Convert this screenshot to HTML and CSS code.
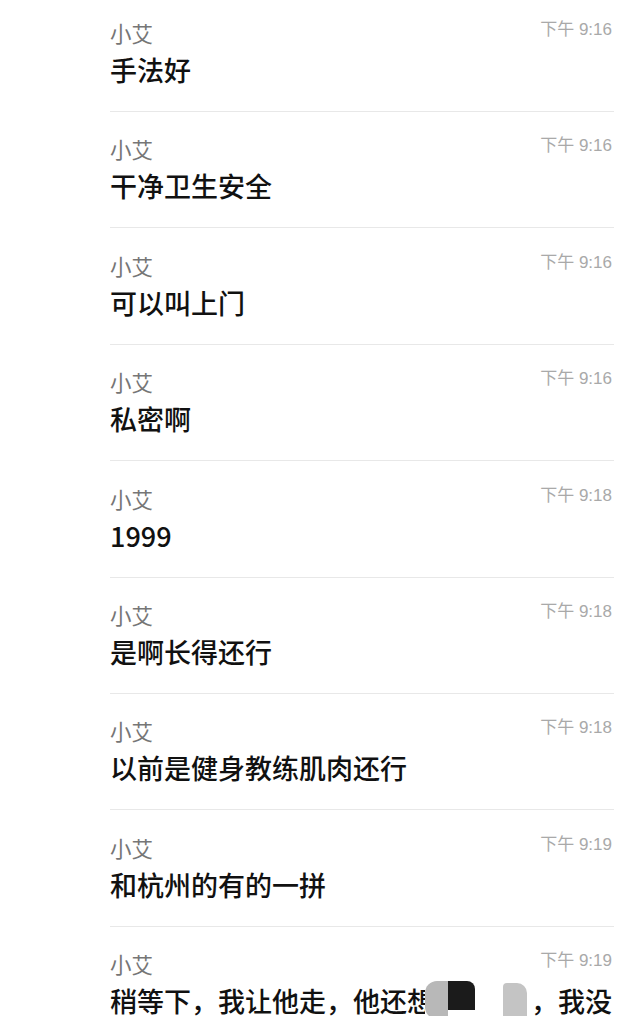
FILE: index.html
```html
<!DOCTYPE html>
<html lang="zh-CN">
<head>
<meta charset="utf-8">
<title>聊天记录</title>
<link rel="stylesheet" href="styles.css">
</head>
<body>
<ul class="list">
  <li class="item"><div class="head"><span class="name">小艾</span><span class="time">下午 9:16</span></div><div class="msg">手法好</div></li>
  <li class="item"><div class="head"><span class="name">小艾</span><span class="time">下午 9:16</span></div><div class="msg">干净卫生安全</div></li>
  <li class="item"><div class="head"><span class="name">小艾</span><span class="time">下午 9:16</span></div><div class="msg">可以叫上门</div></li>
  <li class="item"><div class="head"><span class="name">小艾</span><span class="time">下午 9:16</span></div><div class="msg">私密啊</div></li>
  <li class="item"><div class="head"><span class="name">小艾</span><span class="time">下午 9:18</span></div><div class="msg">1999</div></li>
  <li class="item"><div class="head"><span class="name">小艾</span><span class="time">下午 9:18</span></div><div class="msg">是啊长得还行</div></li>
  <li class="item"><div class="head"><span class="name">小艾</span><span class="time">下午 9:18</span></div><div class="msg">以前是健身教练肌肉还行</div></li>
  <li class="item"><div class="head"><span class="name">小艾</span><span class="time">下午 9:19</span></div><div class="msg">和杭州的有的一拼</div></li>
  <li class="item"><div class="head"><span class="name">小艾</span><span class="time">下午 9:19</span></div><div class="msg">稍等下，我让他走，他还想<span class="redact"><span class="r-gray"></span><span class="r-black"></span><span class="r-white"></span><span class="r-gray2"></span></span>，我没</div></li>
</ul>
</body>
</html>
```
FILE: styles.css
```css
html, body {
  margin: 0;
  padding: 0;
  background: #ffffff;
}
body {
  width: 637px;
  height: 1016px;
  overflow: hidden;
  font-family: "Noto Sans CJK SC", "Noto Sans", sans-serif;
}
.list {
  list-style: none;
  margin: -4.4px 0 0 0;
  padding: 0 23px 0 110px;
}
.item {
  box-sizing: border-box;
  height: 116.4px;
  padding-top: 24.4px;
  border-bottom: 1px solid #e8e8e8;
}
.head {
  display: flex;
  justify-content: space-between;
  align-items: flex-start;
  height: 26px;
}
.name {
  font-size: 21.5px;
  line-height: 26px;
  color: #767676;
}
.time {
  font-family: "Liberation Sans", "Noto Sans CJK SC", sans-serif;
  font-size: 17px;
  line-height: 20px;
  margin-top: 0;
  padding-right: 2px;
  color: #a9a9a9;
}
.msg {
  margin-top: 7px;
  font-size: 27px;
  font-weight: 500;
  line-height: 34px;
  color: #111111;
  white-space: nowrap;
}
.redact {
  display: inline-flex;
  vertical-align: top;
  width: 106px;
  height: 38px;
  margin-left: -9px;
  margin-top: -3px;
  background: #ffffff;
}
.r-gray {
  width: 23px;
  height: 38px;
  background: #b8b8b8;
  border-radius: 12px 0 0 12px;
}
.r-black {
  width: 27px;
  height: 29px;
  background: #1b1b1b;
  border-radius: 0 8px 0 0;
}
.r-white {
  width: 28px;
}
.r-gray2 {
  width: 24px;
  height: 38px;
  margin-top: 2px;
  background: #c4c4c4;
  border-radius: 4px 10px 0 0;
}
```
